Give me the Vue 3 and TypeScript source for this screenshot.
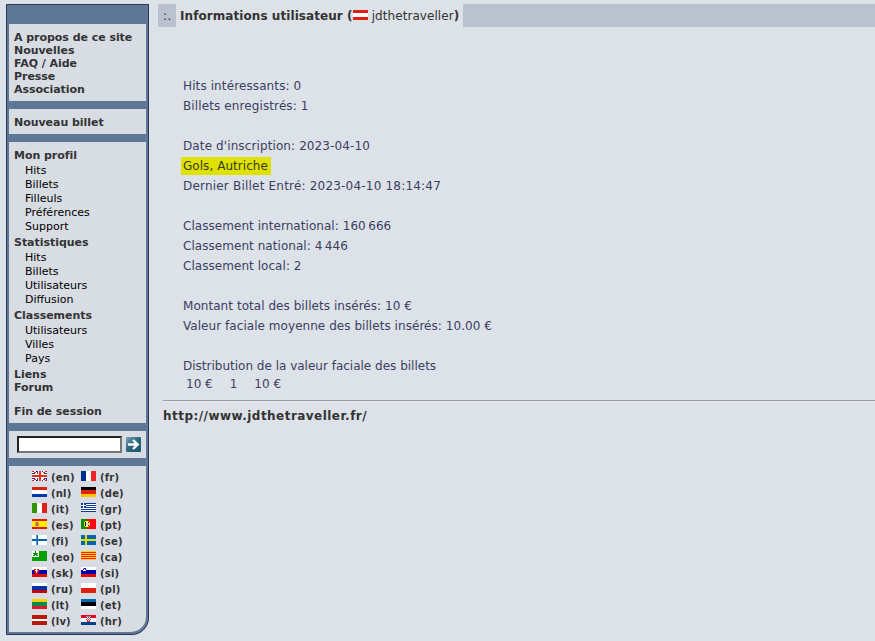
<script setup lang="ts">
type Shape = [number, number, number, number, string]
interface Flag { code: string; shapes: Shape[] }
interface Group { title: string; items: string[] }

const rows = (...c: string[]): Shape[] => {
  const h = 10 / c.length
  return c.map((color, i) => [0, Math.round(i * h), 15, Math.round((i + 1) * h) - Math.round(i * h), color] as Shape)
}
const cols = (...c: string[]): Shape[] => c.map((color, i) => [i * 5, 0, 5, 10, color] as Shape)
const stripes = (a: string, b: string, n = 10): Shape[] =>
  Array.from({ length: n }, (_, i) => [0, i, 15, 1, i % 2 ? b : a] as Shape)

const about: string[] = ['A propos de ce site', 'Nouvelles', 'FAQ / Aide', 'Presse', 'Association']
const groups: Group[] = [
  { title: 'Mon profil', items: ['Hits', 'Billets', 'Filleuls', 'Préférences', 'Support'] },
  { title: 'Statistiques', items: ['Hits', 'Billets', 'Utilisateurs', 'Diffusion'] },
  { title: 'Classements', items: ['Utilisateurs', 'Villes', 'Pays'] },
]

const W = '#ffffff'
const unionJack: Shape[] = [
  [0, 0, 15, 10, '#12308c'],
  [0, 0, 2, 1, '#e0202a'], [2, 0, 2, 1, W], [1, 1, 2, 1, W], [2, 1, 2, 1, '#e0202a'], [4, 1, 1, 1, W], [3, 2, 2, 1, W], [5, 2, 1, 1, '#e0202a'], [0, 1, 1, 1, W],
  [13, 0, 2, 1, '#e0202a'], [11, 0, 2, 1, W], [12, 1, 2, 1, W], [11, 1, 2, 1, '#e0202a'], [10, 1, 1, 1, W], [10, 2, 2, 1, W], [14, 1, 1, 1, W],
  [0, 9, 2, 1, '#e0202a'], [2, 9, 2, 1, W], [1, 8, 2, 1, W], [2, 8, 2, 1, '#e0202a'], [4, 8, 1, 1, W], [3, 7, 2, 1, W], [0, 8, 1, 1, W],
  [13, 9, 2, 1, '#e0202a'], [11, 9, 2, 1, W], [12, 8, 2, 1, W], [11, 8, 2, 1, '#e0202a'], [10, 8, 1, 1, W], [10, 7, 2, 1, W],
  [0, 3, 15, 4, W], [6, 0, 4, 10, W], [0, 4, 15, 2, '#e0301a'], [7, 0, 2, 10, '#e0301a'],
]

const flags: Flag[] = [
  { code: 'en', shapes: unionJack },
  { code: 'fr', shapes: cols('#003189', W, '#ef2329') },
  { code: 'nl', shapes: rows('#de2110', W, '#0039a5') },
  { code: 'de', shapes: rows('#000000', '#de2110', '#ffc600') },
  { code: 'it', shapes: cols('#319400', W, '#de2110') },
  { code: 'gr', shapes: [...stripes('#083994', W, 9), [0, 0, 5, 5, '#083994'], [2, 0, 1, 5, W], [0, 2, 5, 1, W]] },
  { code: 'es', shapes: [[0, 0, 15, 10, '#ffee00'], [0, 0, 15, 2, '#ef1010'], [0, 8, 15, 2, '#ef1010'], [3, 4, 1, 3, '#b88a70'], [4, 3, 2, 4, '#d05a28'], [6, 4, 1, 3, '#b88a70'], [4, 5, 1, 1, '#d8b0b0']] },
  { code: 'pt', shapes: [[0, 0, 15, 10, '#ff0808'], [0, 0, 6, 10, '#088c00'], [4, 2, 4, 6, '#f7e700'], [3, 3, 6, 4, '#f7e700'], [4, 3, 4, 4, '#181010'], [5, 3, 2, 4, W], [5, 4, 3, 2, '#f7c6c6'], [7, 6, 1, 1, '#101010']] },
  { code: 'fi', shapes: [[0, 0, 15, 10, W], [5, 0, 1, 10, '#0068b0'], [4, 0, 1, 10, '#5f9fcd'], [0, 4, 15, 2, '#0068b0']] },
  { code: 'se', shapes: [[0, 0, 15, 10, '#0064b4'], [4, 0, 2, 10, '#dede00'], [0, 4, 15, 2, '#dede00']] },
  { code: 'eo', shapes: [[0, 0, 15, 10, '#00a000'], [0, 0, 7, 6, W], [3, 0, 1, 2, '#009000'], [1, 2, 5, 1, '#009000'], [2, 3, 3, 1, '#009000'], [1, 4, 2, 1, '#009000'], [4, 4, 2, 1, '#009000']] },
  { code: 'ca', shapes: stripes('#ffce18', '#ff2118', 9) },
  { code: 'sk', shapes: [...rows(W, '#0000ad', '#de0808'), [2, 2, 5, 4, '#de0808'], [3, 6, 3, 1, '#de0808'], [4, 2, 1, 4, W], [3, 3, 3, 1, W]] },
  { code: 'si', shapes: [...rows(W, '#0000ad', '#de0808'), [2, 1, 3, 3, '#0808a0'], [3, 4, 1, 1, '#0808a0'], [3, 2, 1, 1, W], [2, 3, 3, 1, W], [2, 1, 1, 1, '#d0b050']] },
  { code: 'ru', shapes: rows(W, '#0031a5', '#c80008') },
  { code: 'pl', shapes: rows(W, '#de2110') },
  { code: 'lt', shapes: rows('#ffce00', '#088c4a', '#e01830') },
  { code: 'et', shapes: rows('#0068ad', '#000000', W) },
  { code: 'lv', shapes: [[0, 0, 15, 10, '#b81808'], [0, 4, 15, 2, W]] },
  { code: 'hr', shapes: [...rows('#e00820', W, '#004288'), [5, 1, 5, 1, '#48a8d0'], [5, 2, 5, 5, '#e82030'], [6, 2, 1, 1, W], [8, 2, 1, 1, W], [5, 3, 1, 1, W], [7, 3, 1, 1, W], [9, 3, 1, 1, W], [6, 4, 1, 1, W], [8, 4, 1, 1, W], [5, 5, 1, 2, W], [7, 5, 1, 1, W], [9, 5, 1, 2, W]] },
]
</script>

<template>
  <div class="page">
    <aside class="sidebar">
      <nav class="panel about">
        <a v-for="t in about" :key="t" class="link">{{ t }}</a>
      </nav>
      <nav class="panel new"><a class="link">Nouveau billet</a></nav>
      <nav class="panel menu">
        <div v-for="g in groups" :key="g.title" class="group">
          <a class="link">{{ g.title }}</a>
          <ul>
            <li v-for="i in g.items" :key="i">{{ i }}</li>
          </ul>
        </div>
        <a class="link">Liens</a>
        <a class="link">Forum</a>
        <a class="link logout">Fin de session</a>
      </nav>
      <form class="panel search" @submit.prevent>
        <input type="text" />
        <button type="submit" aria-label="OK">
          <svg width="15" height="15" viewBox="0 0 15 15">
            <defs>
              <linearGradient id="go" x1="0" y1="0" x2="1" y2="1">
                <stop offset="0" stop-color="#7fa5b4" />
                <stop offset=".45" stop-color="#2b6a80" />
                <stop offset="1" stop-color="#1c566c" />
              </linearGradient>
            </defs>
            <rect width="15" height="15" rx="1" fill="url(#go)" />
            <path d="M2 7.5H11.5M7 3L11.7 7.5L7 12" fill="none" stroke="#fff" stroke-width="2.4" />
          </svg>
        </button>
      </form>
      <div class="panel langs">
        <a v-for="f in flags" :key="f.code" class="lang">
          <svg width="15" height="10" viewBox="0 0 15 10" shape-rendering="crispEdges">
            <rect v-for="(s, i) in f.shapes" :key="i" :x="s[0]" :y="s[1]" :width="s[2]" :height="s[3]" :fill="s[4]" />
          </svg>
          <span>({{ f.code }})</span>
        </a>
      </div>
    </aside>

    <main>
      <header class="heading">
        <span class="mark">:.</span>
        <h1>
          <span class="title">Informations utilisateur (</span>
          <svg width="15" height="10" viewBox="0 0 15 10" shape-rendering="crispEdges">
            <rect width="15" height="10" fill="#de2110" />
            <rect y="3" width="15" height="4" fill="#fff" />
          </svg>
          <span class="user">jdthetraveller</span><span>)</span>
        </h1>
        <span class="bar"></span>
      </header>

      <section class="info">
        <p class="wide">Hits intéressants: 0</p>
        <p class="wide">Billets enregistrés: 1</p>
        <p class="gap wide">Date d'inscription: 2023-04-10</p>
        <p><mark>Gols, Autriche</mark></p>
        <p class="wider">Dernier Billet Entré: 2023-04-10 18:14:47</p>
        <p class="gap">Classement international: 160&#8239;666</p>
        <p>Classement national: 4&#8239;446</p>
        <p>Classement local: 2</p>
        <p class="gap">Montant total des billets insérés: 10 €</p>
        <p>Valeur faciale moyenne des billets insérés: 10.00 €</p>
        <p class="gap plain">Distribution de la valeur faciale des billets</p>
        <div class="values"><span>10 €</span><span>1</span><span>10 €</span></div>
      </section>
      <hr />
      <a class="site">http://www.jdthetraveller.fr/</a>
    </main>
  </div>
</template>

<style>
body { background: #dde1e8; overflow: hidden; }
</style>

<style scoped>
.page {
  display: flex;
  align-items: flex-start;
  gap: 9px;
  box-sizing: border-box;
  height: 641px;
  padding: 4px 0 0 6px;
  font-family: Verdana, "DejaVu Sans", sans-serif;
  font-size: 12px;
  color: #3a4060;
}
.sidebar {
  display: flex;
  flex-direction: column;
  gap: 8px;
  flex: none;
  box-sizing: border-box;
  width: 143px;
  height: 631px;
  padding: 19px 2px 2px 2px;
  border: 1px solid #293955;
  border-radius: 0 0 17px 0;
  background: #5f7797;
  font-size: 11px;
}
.panel { box-sizing: border-box; flex: none; padding: 7px 0 0 5px; background: #d8dce3; }
.about { height: 77px; }
.new { height: 25px; }
.menu { height: 281px; }
.link { display: block; height: 13px; line-height: 13px; font-weight: bold; letter-spacing: -.04px; color: #333; white-space: nowrap; }
.group ul { margin: 0; padding: 2px 0 2px 11px; list-style: none; color: #000; }
.group li { height: 14px; line-height: 14px; }
.logout { margin-top: 11px; }
.search { display: flex; align-items: flex-start; gap: 4px; height: 27px; margin: 0; padding: 5px 0 0 8px; }
.search input {
  box-sizing: border-box;
  width: 105px;
  height: 17px;
  margin: 0;
  padding: 0;
  border: 2px solid;
  border-color: #222 #767676 #767676 #222;
  background: #fff;
}
.search button { width: 15px; height: 15px; margin: 1px 0 0; padding: 0; border: 0; background: none; }
.search button svg { display: block; }
.langs {
  display: grid;
  grid-template-columns: 49px 49px;
  grid-auto-rows: 16px;
  flex: 1;
  padding: 5px 0 0 23px;
  border-radius: 0 0 15px 0;
}
.lang { display: flex; gap: 4px; height: 16px; font-size: 10px; line-height: 14px; font-weight: bold; letter-spacing: .2px; color: #333; }
.lang svg { display: block; flex: none; }
main { flex: 1; min-width: 0; }
.heading { display: flex; height: 23px; line-height: 24px; color: #333; }
.mark { width: 13px; padding-left: 5px; background: #bac2d0; letter-spacing: .4px; }
.heading h1 {
  display: flex;
  box-sizing: border-box;
  width: 287px;
  margin: 0;
  padding-left: 4px;
  font-size: 12px;
  letter-spacing: .07px;
  white-space: nowrap;
}
.heading h1 svg { margin: 6px 4px 0 0; flex: none; }
.user { font-weight: normal; }
.bar { flex: 1; background: #bac2d0; }
.info { padding: 49px 0 0 25px; }
.info p { height: 20px; margin: 0; line-height: 20px; letter-spacing: .05px; white-space: nowrap; }
.info .gap { margin-top: 20px; }
.info .wide { letter-spacing: .11px; }
.info .wider { letter-spacing: .2px; }
.info .plain { letter-spacing: 0; }
mark { display: inline-block; height: 18px; margin-left: -2px; padding: 0 3px 0 2px; line-height: 18px; background: #dfe200; color: #373b14; }
.values { display: flex; gap: 17px; height: 16px; padding-left: 3px; line-height: 16px; }
hr { margin: 8px 0 0 5px; border: 0; border-top: 1px solid #999; border-bottom: 1px solid #eceef2; }
.site { display: block; margin: 6px 0 0 5px; line-height: 16px; font-weight: bold; letter-spacing: .46px; color: #333; }
</style>
